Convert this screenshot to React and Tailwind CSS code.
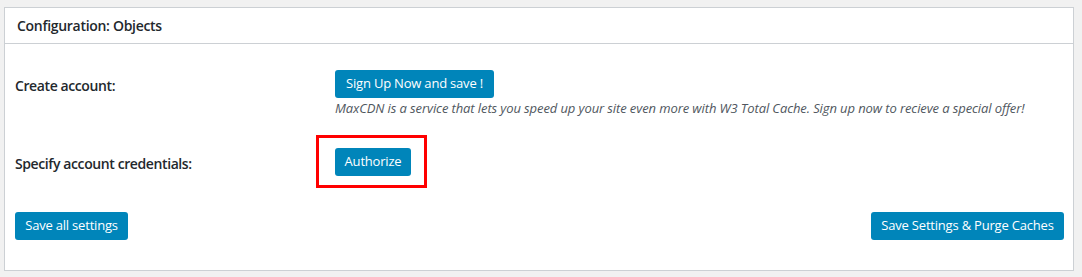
export default function App() {
  return (
    <div
      className="min-h-[277px] bg-[#f1f1f1] pt-[7px] pl-[4px] pr-[8px] text-[#23282d]"
      style={{ fontFamily: '"Open Sans", "Noto Sans", Arial, sans-serif' }}
    >
      <div className="w-[1070px] border border-[#ccd0d4] bg-white">
        {/* Header */}
        <div className="flex h-[36px] items-center border-b border-[#ccd0d4] pl-[12px]">
          <h3 className="text-[14px] font-semibold tracking-[-0.3px]">Configuration: Objects</h3>
        </div>

        {/* Body */}
        <div className="pl-[10px] pr-[10px] pt-[26px]">
          {/* Row: create account */}
          <div className="flex items-start">
            <div className="mt-[6px] w-[320px] text-[14px] font-semibold leading-[20px] tracking-[-0.4px]">
              Create account:
            </div>
            <div className="flex flex-col items-start">
              <button className="h-[28px] w-[159px] rounded-[3px] bg-[#0085ba] text-[13px] tracking-[-0.2px] text-white">
                Sign Up Now and save !
              </button>
              <p className="mt-[1px] text-[13px] leading-[18px] italic tracking-[-0.1px] text-[#50575e]">
                MaxCDN is a service that lets you speed up your site even more with W3 Total Cache. Sign up now to recieve a special offer!
              </p>
            </div>
          </div>

          {/* Row: credentials */}
          <div className="mt-[18px] flex items-center">
            <div className="w-[320px] pt-[4px] text-[14px] font-semibold leading-[20px] tracking-[-0.4px]">
              Specify account credentials:
            </div>
            <div className="-ml-[19px] border-[3px] border-[#ff0000] pt-[10px] pb-[9px] pl-[16px] pr-[13px]">
              <button className="block h-[28px] w-[76px] rounded-[3px] bg-[#0085ba] text-[13px] tracking-[-0.2px] text-white">
                Authorize
              </button>
            </div>
          </div>
        </div>

        {/* Footer */}
        <div className="flex items-center justify-between pl-[10px] pr-[9px] pt-[24px] pb-[30px]">
          <button className="h-[28px] w-[113px] rounded-[3px] bg-[#0085ba] text-[13px] tracking-[-0.2px] text-white">
            Save all settings
          </button>
          <button className="h-[28px] w-[193px] rounded-[3px] bg-[#0085ba] text-[13px] tracking-[-0.2px] text-white">
            Save Settings &amp; Purge Caches
          </button>
        </div>
      </div>
    </div>
  );
}
